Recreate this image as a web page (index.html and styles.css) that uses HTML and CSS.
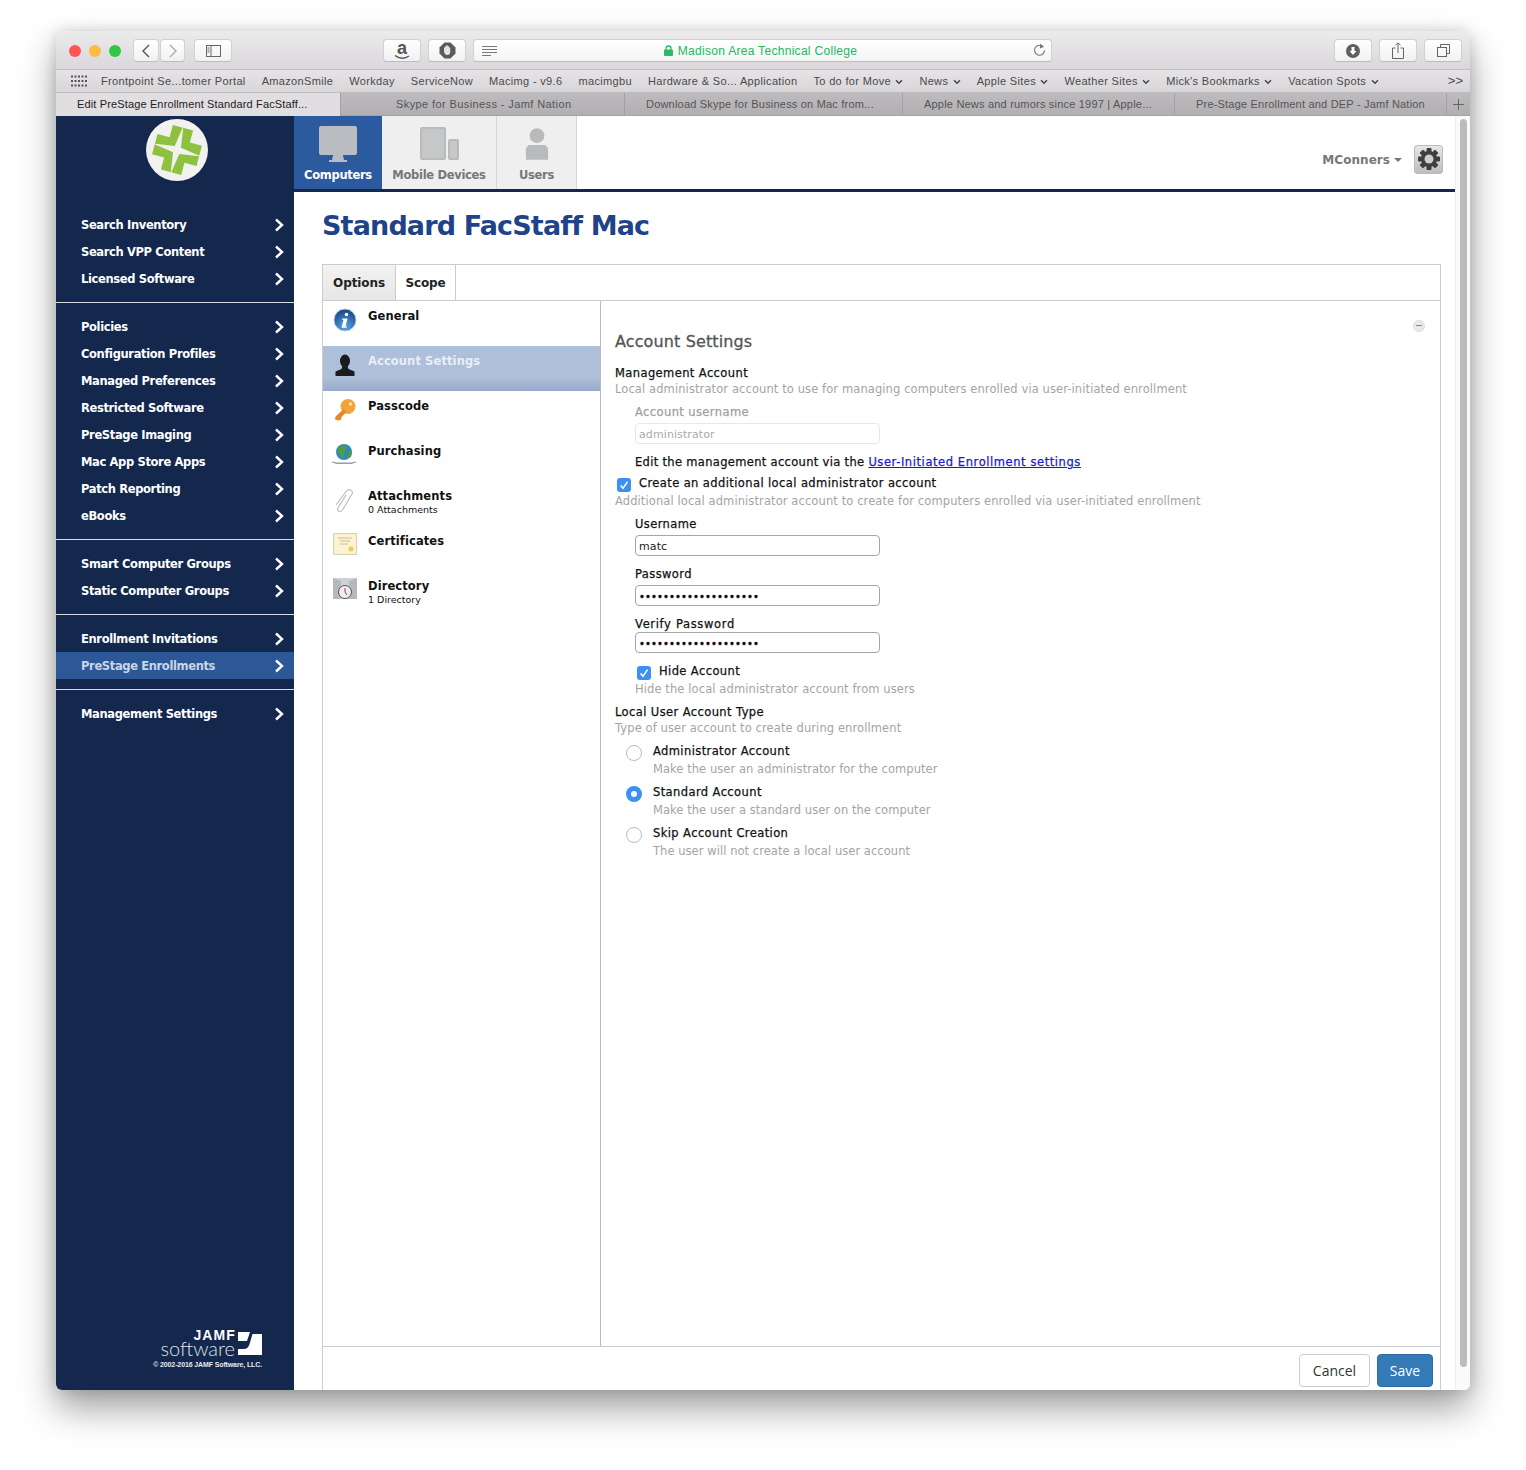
FILE: index.html
```html
<!DOCTYPE html>
<html lang="en">
<head>
<meta charset="utf-8">
<title>Standard FacStaff Mac</title>
<link rel="stylesheet" href="styles.css">
</head>
<body>
<svg class="defs" width="0" height="0" aria-hidden="true">
  <symbol id="chev" viewBox="0 0 10 14"><path d="M2 1.500 8 7l-6 5.500" fill="none" stroke="#fff" stroke-width="2.400"/></symbol>
  <symbol id="tick" viewBox="0 0 14 14"><path d="M3.600 7.400 6 10.200 10.600 3.600" fill="none" stroke="#fff" stroke-width="1.500"/></symbol>
  <symbol id="down" viewBox="0 0 8 6"><path d="M1 1.200 4 4.200 7 1.200" fill="none" stroke="#444" stroke-width="1.400"/></symbol>
</svg>
<div class="window">
  <header class="toolbar">
    <span class="light red"></span><span class="light yellow"></span><span class="light green"></span>
    <button class="tb back"><svg width="10" height="16" viewBox="0 0 10 16"><path d="M8 2 2 8l6 6" fill="none" stroke="#555" stroke-width="1.400"/></svg></button>
    <button class="tb fwd"><svg width="10" height="16" viewBox="0 0 10 16"><path d="M2 2l6 6-6 6" fill="none" stroke="#aaa" stroke-width="1.400"/></svg></button>
    <button class="tb wide sidebar-btn"><svg width="15" height="12" viewBox="0 0 15 12"><rect x=".5" y=".5" width="14" height="11" fill="none" stroke="#666"/><path d="M5 .5v11M1.500 3h2M1.500 5h2M1.500 7h2" stroke="#666" fill="none"/></svg></button>
    <button class="tb wide amazon"><svg class="amz-ic" width="20" height="24" viewBox="0 0 20 24"><text x="10" y="17" text-anchor="middle" class="amz">a</text><path d="M3 18.500c4 3.500 10 3.500 14 .5" fill="none" stroke="#555" stroke-width="1.400"/></svg></button>
    <button class="tb wide shield"><svg width="17" height="17" viewBox="0 0 17 17"><path d="M5.500.5h6l5 5v6l-5 5h-6l-5-5v-6z" fill="#5a5a5a"/><path d="M5 9V5.500h1V4.200h1.300V3.200h1.400v1h1.300v1.300h1.200V10c0 1.800-1.200 3-2.800 3C6.200 13 5 11 5 9z" fill="#e4e4e4"/></svg></button>
    <div class="url">
      <svg class="menu-ic" width="15" height="10" viewBox="0 0 15 10"><path d="M0 .5h15M0 3.500h15M0 6.500h15M0 9.500h9" stroke="#777" fill="none"/></svg>
      <span class="site"><svg width="9" height="11" viewBox="0 0 9 11"><path d="M2 5V3.500a2.500 2.500 0 0 1 5 0V5" fill="none" stroke="#2bbb66" stroke-width="1.300"/><rect y="4.500" width="9" height="6.500" rx="1" fill="#2bbb66"/></svg>Madison Area Technical College</span>
      <svg class="reload" width="13" height="14" viewBox="0 0 13 14"><path d="M10.500 4.200a5 5 0 1 0 1 3" fill="none" stroke="#777" stroke-width="1.100"/><path d="M7 .5l3.800 3.200L7 5.500z" fill="#777"/></svg>
    </div>
    <button class="tb wide push"><svg width="14" height="14" viewBox="0 0 14 14"><circle cx="7" cy="7" r="7" fill="#5f5f5f"/><path d="M5.500 3h3v4h2L7 11 3.500 7h2z" fill="#fff"/></svg></button>
    <button class="tb wide"><svg width="12" height="17" viewBox="0 0 12 17"><path d="M3.500 6H.5v10.500h11V6h-3M6 11V1M3.500 3.300 6 .8l2.500 2.500" fill="none" stroke="#666"/></svg></button>
    <button class="tb wide"><svg width="13" height="13" viewBox="0 0 13 13"><path d="M3.500 3V.5h9v9H10" fill="none" stroke="#666"/><rect x=".5" y="3.500" width="9" height="9" fill="none" stroke="#666"/></svg></button>
  </header>

  <nav class="bookmarks">
    <svg class="grid-ic" width="16" height="12" viewBox="0 0 16 12"><path d="M0 1.500h16M0 6h16M0 10.500h16" stroke="#555" stroke-width="2" stroke-dasharray="2 1.500" fill="none"/></svg>
    <span>Frontpoint Se...tomer Portal</span>
    <span>AmazonSmile</span>
    <span>Workday</span>
    <span>ServiceNow</span>
    <span>Macimg - v9.6</span>
    <span>macimgbu</span>
    <span>Hardware &amp; So... Application</span>
    <span class="bm-folder">To do for Move <svg width="8" height="6"><use href="#down"/></svg></span>
    <span class="bm-folder">News <svg width="8" height="6"><use href="#down"/></svg></span>
    <span class="bm-folder">Apple Sites <svg width="8" height="6"><use href="#down"/></svg></span>
    <span class="bm-folder">Weather Sites <svg width="8" height="6"><use href="#down"/></svg></span>
    <span class="bm-folder">Mick's Bookmarks <svg width="8" height="6"><use href="#down"/></svg></span>
    <span class="bm-folder">Vacation Spots <svg width="8" height="6"><use href="#down"/></svg></span>
    <span class="more">&gt;&gt;</span>
  </nav>

  <div class="tabs">
    <div class="tab active">Edit PreStage Enrollment Standard FacStaff...</div>
    <div class="tab tab-wide">Skype for Business - Jamf Nation</div>
    <div class="tab">Download Skype for Business on Mac from...</div>
    <div class="tab">Apple News and rumors since 1997 | Apple...</div>
    <div class="tab">Pre-Stage Enrollment and DEP - Jamf Nation</div>
    <div class="tab plus"><svg width="11" height="11" viewBox="0 0 11 11"><path d="M5.500 0v11M0 5.500h11" stroke="#666" fill="none"/></svg></div>
  </div>

  <div class="page">
    <aside class="sidebar">
      <div class="logo">
        <svg width="62" height="62" viewBox="0 0 62 62">
          <circle cx="31" cy="31" r="31" fill="#f1f2ef"/>
          <g transform="rotate(15 31 31)">
            <path d="M20.500 8h21v12.500H54v21H41.500V54h-21V41.500H8v-21h12.500z" fill="#8dc13f"/>
            <path d="M31 6l3.200 21.800L56 31l-21.800 3.200L31 56l-3.200-21.800L6 31l21.800-3.200z" fill="#f1f2ef"/>
          </g>
        </svg>
      </div>
      <div class="side-group">
        <a class="side-item">Search Inventory<svg width="10" height="14"><use href="#chev"/></svg></a>
        <a class="side-item">Search VPP Content<svg width="10" height="14"><use href="#chev"/></svg></a>
        <a class="side-item">Licensed Software<svg width="10" height="14"><use href="#chev"/></svg></a>
      </div>
      <div class="side-group">
        <a class="side-item">Policies<svg width="10" height="14"><use href="#chev"/></svg></a>
        <a class="side-item">Configuration Profiles<svg width="10" height="14"><use href="#chev"/></svg></a>
        <a class="side-item">Managed Preferences<svg width="10" height="14"><use href="#chev"/></svg></a>
        <a class="side-item">Restricted Software<svg width="10" height="14"><use href="#chev"/></svg></a>
        <a class="side-item">PreStage Imaging<svg width="10" height="14"><use href="#chev"/></svg></a>
        <a class="side-item">Mac App Store Apps<svg width="10" height="14"><use href="#chev"/></svg></a>
        <a class="side-item">Patch Reporting<svg width="10" height="14"><use href="#chev"/></svg></a>
        <a class="side-item">eBooks<svg width="10" height="14"><use href="#chev"/></svg></a>
      </div>
      <div class="side-group">
        <a class="side-item">Smart Computer Groups<svg width="10" height="14"><use href="#chev"/></svg></a>
        <a class="side-item">Static Computer Groups<svg width="10" height="14"><use href="#chev"/></svg></a>
      </div>
      <div class="side-group">
        <a class="side-item">Enrollment Invitations<svg width="10" height="14"><use href="#chev"/></svg></a>
        <a class="side-item current">PreStage Enrollments<svg width="10" height="14"><use href="#chev"/></svg></a>
      </div>
      <div class="side-group last">
        <a class="side-item">Management Settings<svg width="10" height="14"><use href="#chev"/></svg></a>
      </div>
      <div class="brand">
        <div class="brand-row">
          <div class="brand-words"><span class="jamf">JAMF</span><span class="software">software</span></div>
          <svg width="24" height="23" viewBox="0 0 24 23"><path d="M0 0h12L9 9H0z" fill="#fff"/><path d="M14.500 2H24v21H0v-6h6c4 0 5-3 6-6.500z" fill="#fff"/></svg>
        </div>
        <div class="copyright">© 2002-2016 JAMF Software, LLC.</div>
      </div>
    </aside>

    <div class="content">
      <div class="topbar">
        <div class="cat active">
          <svg width="40" height="36" viewBox="0 0 40 36"><rect x="1" y="0" width="38" height="29" rx="2" fill="#b9bcc0"/><path d="M15 29h10l1 5h3v2H11v-2h3z" fill="#b9bcc0"/></svg>
          <span>Computers</span>
        </div>
        <div class="cat">
          <svg width="40" height="36" viewBox="0 0 40 36"><rect x="1" y="1" width="26" height="33" rx="2" fill="#b9babb"/><rect x="3" y="3" width="22" height="29" fill="#c6c7c8"/><rect x="29" y="13" width="11" height="21" rx="2" fill="#b9babb"/><rect x="31" y="15" width="7" height="17" fill="#c6c7c8"/></svg>
          <span>Mobile Devices</span>
        </div>
        <div class="cat users">
          <svg width="24" height="36" viewBox="0 0 26 36"><circle cx="13" cy="9" r="8" fill="#b9babb"/><path d="M4 19h18l3 4v12H1V23z" fill="#b9babb"/></svg>
          <span>Users</span>
        </div>
        <div class="account">
          <span class="user-name">MConners</span><span class="caret"></span>
          <button class="gear">
            <svg width="22" height="22" viewBox="0 0 22 22"><g fill="#3f3f3f"><circle cx="11" cy="11" r="8"/><rect x="8.500" y="0" width="5" height="22" rx="1"/><rect x="8.500" y="0" width="5" height="22" rx="1" transform="rotate(45 11 11)"/><rect x="8.500" y="0" width="5" height="22" rx="1" transform="rotate(90 11 11)"/><rect x="8.500" y="0" width="5" height="22" rx="1" transform="rotate(135 11 11)"/></g><circle cx="11" cy="11" r="4.500" fill="#cfcfcf"/></svg>
          </button>
        </div>
      </div>

      <main class="main">
        <h1 class="title">Standard FacStaff Mac</h1>
        <section class="panel">
          <div class="panel-tabs">
            <div class="ptab selected">Options</div>
            <div class="ptab">Scope</div>
          </div>
          <div class="panel-body">
            <ul class="payloads">
              <li class="payload">
                <svg width="24" height="24" viewBox="0 0 24 24"><defs><radialGradient id="gi" cx=".5" cy=".8" r=".8"><stop offset="0" stop-color="#5aa6ea"/><stop offset="1" stop-color="#14407f"/></radialGradient></defs><circle cx="12" cy="12" r="11" fill="url(#gi)" stroke="#b8cce4"/><circle cx="13.500" cy="6.500" r="1.800" fill="#fff"/><path d="M9.500 10.500h5l-2 8h1.500l-.5 1.200H8.500l2-8H9z" fill="#fff"/></svg>
                <div><strong>General</strong></div>
              </li>
              <li class="payload current">
                <svg width="24" height="24" viewBox="0 0 24 24"><ellipse cx="12" cy="8" rx="5" ry="6.500" fill="#1c1c1c"/><path d="M9.500 13h5l1 3 6 2.500V23h-19v-4.500l6-2.500z" fill="#1c1c1c"/></svg>
                <div><strong>Account Settings</strong></div>
              </li>
              <li class="payload">
                <svg width="24" height="24" viewBox="0 0 24 24"><circle cx="15" cy="8.500" r="7.500" fill="#f2a33a"/><path d="M10.500 11l3 3-5 5-.5 3-3 .5-3-1 .5-3z" fill="#e88a24"/><circle cx="17.500" cy="6" r="1.800" fill="#fde2b0"/></svg>
                <div><strong>Passcode</strong></div>
              </li>
              <li class="payload">
                <svg class="wide-ic" width="28" height="24" viewBox="0 0 28 24"><circle cx="14" cy="9" r="8" fill="#2f86c9"/><path d="M9 3l6-1 2 4-3 3 1 4-3 3-2-5-3-2zM18 9l4 0-1 5-3 1z" fill="#4b9f3c"/><path d="M1 19.500l3-1 2 1h16l2-1 3 1-3 .5-2 1H6l-2-1z" fill="#9aa0a6"/></svg>
                <div><strong>Purchasing</strong></div>
              </li>
              <li class="payload">
                <svg width="24" height="26" viewBox="0 0 24 26"><path d="M13 7 5 20c-1.500 3 2.500 5 4.500 2L19 6c2-3-3-6-5.500-3L3 17" fill="none" stroke="#bcbec2" stroke-width="1.200"/></svg>
                <div><strong>Attachments</strong><small>0 Attachments</small></div>
              </li>
              <li class="payload">
                <svg width="24" height="22" viewBox="0 0 24 22"><rect x=".5" y=".5" width="23" height="21" fill="#fbf3d2" stroke="#d8d1ae"/><path d="M5 5h14M7 8h10M7 11h8" stroke="#c9c1a0" fill="none"/><circle cx="18" cy="16" r="2.500" fill="#efcb5a"/></svg>
                <div><strong>Certificates</strong></div>
              </li>
              <li class="payload">
                <svg width="24" height="22" viewBox="0 0 24 22"><rect y="0" width="24" height="21" fill="#cfd1d4"/><path d="M0 0l8 3v18H0zM16 3l8-3v21h-8z" fill="#b5b8bc"/><circle cx="12" cy="14" r="6.500" fill="#eee" stroke="#555"/><path d="M12 10v4l2 3" stroke="#b33" fill="none"/></svg>
                <div><strong>Directory</strong><small>1 Directory</small></div>
              </li>
            </ul>

            <form class="settings">
              <span class="collapse"></span>
              <h2>Account Settings</h2>
              <div class="h mt13">Management Account</div>
              <div class="d">Local administrator account to use for managing computers enrolled via user-initiated enrollment</div>
              <div class="ind">
                <div class="l disabled mt7">Account username</div>
                <input class="field dis mt3" type="text" value="administrator" disabled>
                <div class="l edit-line mt10">Edit the management account via the <a class="link">User-Initiated Enrollment settings</a></div>
              </div>
              <div class="h check-row mt5"><span class="check"><svg width="14" height="14"><use href="#tick"/></svg></span>Create an additional local administrator account</div>
              <div class="d mt2">Additional local administrator account to create for computers enrolled via user-initiated enrollment</div>
              <div class="ind">
                <div class="l mt7">Username</div>
                <input class="field mt3" type="text" value="matc">
                <div class="l mt10">Password</div>
                <input class="field pw mt3" type="password" value="aaaaaaaaaaaaaaaaaaaa">
                <div class="l verify mt10">Verify Password</div>
                <input class="field pw" type="password" value="aaaaaaaaaaaaaaaaaaaa">
                <div class="l check-row mt10"><span class="check"><svg width="14" height="14"><use href="#tick"/></svg></span>Hide Account</div>
                <div class="d mt2">Hide the local administrator account from users</div>
              </div>
              <div class="h mt7">Local User Account Type</div>
              <div class="d">Type of user account to create during enrollment</div>
              <div class="radio mt7"><span class="dot"></span><div class="l">Administrator Account</div></div>
              <div class="d radio-d mt2">Make the user an administrator for the computer</div>
              <div class="radio mt7"><span class="dot on"></span><div class="l">Standard Account</div></div>
              <div class="d radio-d mt2">Make the user a standard user on the computer</div>
              <div class="radio mt7"><span class="dot"></span><div class="l">Skip Account Creation</div></div>
              <div class="d radio-d mt2">The user will not create a local user account</div>
            </form>
          </div>
          <div class="panel-foot">
            <button class="btn cancel">Cancel</button>
            <button class="btn save">Save</button>
          </div>
        </section>
      </main>
    </div>
    <div class="scrollbar"><span class="thumb"></span></div>
  </div>
</div>
</body>
</html>
```
FILE: styles.css
```css
* { box-sizing: border-box; }
html, body { margin: 0; height: 1470px; background: #fff; overflow: hidden; }
body { padding: 31px 56px 0; font-family: "DejaVu Sans", sans-serif; }
.defs { position: absolute; }
.window { width: 1414px; height: 1359px; display: flex; flex-direction: column; border-radius: 6px; overflow: hidden; box-shadow: 0 18px 36px rgba(0,0,0,.38), 0 0 14px rgba(0,0,0,.14); }

.toolbar { height: 39px; flex: none; display: flex; align-items: center; padding: 1px 8px 0 13px; background: linear-gradient(#ecebec, #d9d7d9); border-bottom: 1px solid #c3c1c3; }
.light { width: 12px; height: 12px; border-radius: 50%; margin-right: 8px; }
.red { background: #fc5753; } .yellow { background: #fdbc40; } .green { background: #33c748; margin-right: 0; }
.tb { height: 23px; width: 26px; padding: 0; border: 1px solid #d2d0d2; border-bottom-color: #bdbbbd; border-radius: 4px; background: linear-gradient(#fff, #f1f1f1); display: flex; align-items: center; justify-content: center; flex: none; }
.tb.wide { width: 38px; margin-left: 7px; }
.back { margin-left: 12px; } .fwd { margin-left: 1px; width: 25px; }
.tb.sidebar-btn { margin-left: 9px; }
.tb.amazon { margin-left: 151px; }
.amz-ic { align-self: flex-start; margin-top: -3px; }
.amz { font: bold 18px "Liberation Sans", sans-serif; fill: #555; }
.url { width: 579px; height: 23px; margin-left: 7px; flex: none; display: flex; align-items: center; position: relative; justify-content: center; padding-right: 4px; background: linear-gradient(#fff, #f4f4f4); border: 1px solid #d2d0d2; border-bottom-color: #bdbbbd; border-radius: 4px; }
.menu-ic { position: absolute; left: 8px; top: 6px; }
.reload { position: absolute; right: 5px; top: 3px; }
.site { display: flex; align-items: center; gap: 5px; font: 12px/16px "Liberation Sans", sans-serif; letter-spacing: .3px; color: #22b863; }
.tb.push { margin-left: auto; }

.bookmarks { height: 23px; flex: none; display: flex; align-items: center; gap: 16px; padding: 0 7px 0 15px; background: linear-gradient(#e5e3e5, #d8d6d8); border-bottom: 1px solid #bdbbbd; font: 11px/14px "Liberation Sans", sans-serif; letter-spacing: .34px; color: #4a4a4a; white-space: nowrap; }
.grid-ic { margin-right: -2px; flex: none; }
.bm-folder svg { margin-left: 1px; }
.more { margin-left: auto; font-size: 13px; letter-spacing: 0; }

.tabs { height: 23px; flex: none; display: grid; grid-template-columns: 285px 284px 278px 272px 272px 23px; background: linear-gradient(#bdbbbd, #b1afb1); border-bottom: 1px solid #a5a3a5; font: 11px/14px "Liberation Sans", sans-serif; letter-spacing: .2px; color: #555; }
.tab { display: flex; align-items: center; padding: 0 0 2px 21px; border-right: 1px solid #a2a0a2; white-space: nowrap; overflow: hidden; }
.tab-wide { letter-spacing: .4px; padding-left: 55px; }
.tab.active { background: #e0dee0; color: #222; height: 23px; letter-spacing: .14px; }
.tab.plus { border-right: 0; padding: 0 0 0 6px; }

.page { flex: 1; min-height: 0; display: flex; background: #fff; }
.sidebar { width: 238px; flex: none; background: #14274d; display: flex; flex-direction: column; color: #fff; }
.logo { height: 95px; padding: 3px 0 0 90px; flex: none; }
.side-group { padding-bottom: 10px; margin-bottom: 10px; border-bottom: 1px solid #d8dde6; }
.side-group.last { border-bottom: 0; }
.side-item { height: 27px; display: flex; align-items: center; justify-content: space-between; padding: 0 10px 0 25px; font-size: 11.5px; font-weight: 700; letter-spacing: -.36px; }
.side-item.current { background: #2c5898; color: #c9d6e8; }
.brand { margin-top: auto; padding: 0 32px 21px 0; display: flex; flex-direction: column; align-items: flex-end; }
.brand-row { display: flex; align-items: flex-end; gap: 3px; }
.brand-words { display: flex; flex-direction: column; align-items: flex-end; }
.jamf { font: bold 14px/11px "Liberation Sans", sans-serif; letter-spacing: 1.100px; margin-right: -1px; }
.software { font: 300 20px/14px Lato, sans-serif; color: #dfe4ec; }
.copyright { font: bold 7px/9px "Liberation Sans", sans-serif; margin-top: 5px; color: #e8ebf0; letter-spacing: -.12px; }

.content { flex: 1; min-width: 0; display: flex; flex-direction: column; }
.topbar { height: 76px; flex: none; display: flex; border-bottom: 3px solid #14274d; }
.cat { width: 115px; height: 73px; padding-top: 10px; background: #efefef; border-right: 1px solid #d6d6d6; display: flex; flex-direction: column; align-items: center; color: #777; font-size: 11.5px; font-weight: 700; letter-spacing: -.3px; }
.cat span { margin-top: 5px; line-height: 16px; }
.cat.active { width: 88px; background: #2b5a9e; color: #fff; border-right: 0; }
.cat.users { width: 80px; }
.account { margin-left: auto; display: flex; align-items: center; padding: 13px 12px 0 0; }
.user-name { font-size: 12px; font-weight: 700; color: #777; letter-spacing: .05px; margin-top: 1px; }
.caret { width: 0; height: 0; margin: 2px 12px 0 4px; border: 4px solid transparent; border-top-color: #777; border-bottom: 0; }
.gear { width: 29px; height: 29px; padding: 0; border: 1px solid #bbb; border-radius: 3px; background: linear-gradient(#e6e6e6, #bdbdbd); display: flex; align-items: center; justify-content: center; }

.main { flex: 1; min-height: 0; display: flex; flex-direction: column; padding-left: 28px; padding-right: 14px; }
.title { margin: 16px 0 20px; font-size: 27px; line-height: 36px; font-weight: 700; color: #1f4388; letter-spacing: -.85px; }
.panel { flex: 1; min-height: 0; display: flex; flex-direction: column; border: 1px solid #ccc; border-bottom: 0; }
.panel-tabs { height: 36px; flex: none; display: flex; border-bottom: 1px solid #ccc; }
.ptab { width: 60px; display: flex; align-items: center; justify-content: center; border-right: 1px solid #ccc; font-size: 12px; font-weight: 700; color: #222; letter-spacing: -.1px; }
.ptab.selected { width: 73px; background: linear-gradient(#f2f2f2, #e6e6e6); }
.panel-body { flex: 1; min-height: 0; display: flex; border-bottom: 1px solid #ccc; }
.payloads { width: 278px; flex: none; margin: 0; padding: 0; list-style: none; border-right: 1px solid #bbb; }
.payload { height: 45px; display: flex; gap: 11px; padding: 7px 0 0 10px; color: #111; }
.payload > svg { flex: none; }
.payload > .wide-ic { margin-left: -3px; margin-right: -1px; }
.payload strong { display: block; font-size: 11.5px; line-height: 16px; font-weight: 700; letter-spacing: .1px; }
.payload small { display: block; font-size: 9.5px; line-height: 12px; }
.payload.current { background: linear-gradient(#adbfd9 70%, #97abcb); color: #e9eef6; }

.settings { flex: 1; min-width: 0; padding: 31px 0 0 14px; position: relative; font-size: 11.5px; line-height: 16px; letter-spacing: .1px; color: #111; }
.collapse { position: absolute; top: 19px; right: 15px; width: 12px; height: 12px; border-radius: 50%; background: #e9e9e9; border: 1px solid #ddd; }
.collapse::after { content: ""; position: absolute; left: 2px; right: 2px; top: 4px; height: 1px; background: #888; }
.settings h2 { margin: 0; font-size: 16px; line-height: 20px; font-weight: 400; letter-spacing: .12px; -webkit-text-stroke: .3px #555; color: #555; }
.h, .l { font-weight: 400; letter-spacing: .4px; -webkit-text-stroke: .25px #111; }
.edit-line { letter-spacing: .32px; }
.verify { letter-spacing: .66px; }
.d { color: #a4a4a4; }
.ind { padding-left: 20px; }
.disabled { color: #a0a0a0; -webkit-text-stroke: .25px #a0a0a0; }
.link { color: #1a1ad0; text-decoration: underline; letter-spacing: .58px; -webkit-text-stroke: .25px #1a1ad0; }
.field { display: block; width: 245px; height: 21px; padding: 2px 3px 0; border: 1px solid #a6a6a6; border-radius: 4px; font: 11px "DejaVu Sans", sans-serif; letter-spacing: .1px; color: #222; background: #fff; outline: 0; }
.field.dis { border-color: #e8e8e8; background: #fff; color: #aaa; }
.field.pw { letter-spacing: .1px; font-size: 10px; color: #000; -webkit-text-stroke: .3px #000; }
.check-row { display: flex; align-items: center; gap: 8px; height: 16px; }
.check { width: 14px; height: 14px; margin: 3px 0 0 2px; border-radius: 3px; background: #3d8ff2; display: block; flex: none; }
.check svg { display: block; }
.radio { display: flex; align-items: center; gap: 11px; height: 16px; padding-left: 11px; }
.dot { width: 16px; height: 16px; margin-top: 4px; border-radius: 50%; border: 1px solid #bbb; background: #fff; flex: none; }
.dot.on { border: 5px solid #3d8ff2; }
.radio-d { padding-left: 38px; letter-spacing: .05px; }
.mt2 { margin-top: 2px; } .mt3 { margin-top: 3px; } .mt5 { margin-top: 5px; } .mt7 { margin-top: 7px; } .mt10 { margin-top: 10px; } .mt13 { margin-top: 13px; }

.panel-foot { height: 43px; flex: none; display: flex; justify-content: flex-end; gap: 7px; padding: 7px 7px 0 0; }
.btn { height: 33px; border-radius: 4px; font: 14px "Open Sans", sans-serif; border: 1px solid #ccc; background: #fff; color: #333; padding: 0; }
.cancel { width: 71px; }
.save { width: 56px; background: #337ab7; border-color: #2e6da4; color: #fff; }

.scrollbar { width: 15px; flex: none; padding: 3px 4px 0 4px; background: #fafafa; border-left: 1px solid #eee; }
.thumb { display: block; width: 7px; height: 1248px; border-radius: 4px; background: #bcbcbc; }
```
